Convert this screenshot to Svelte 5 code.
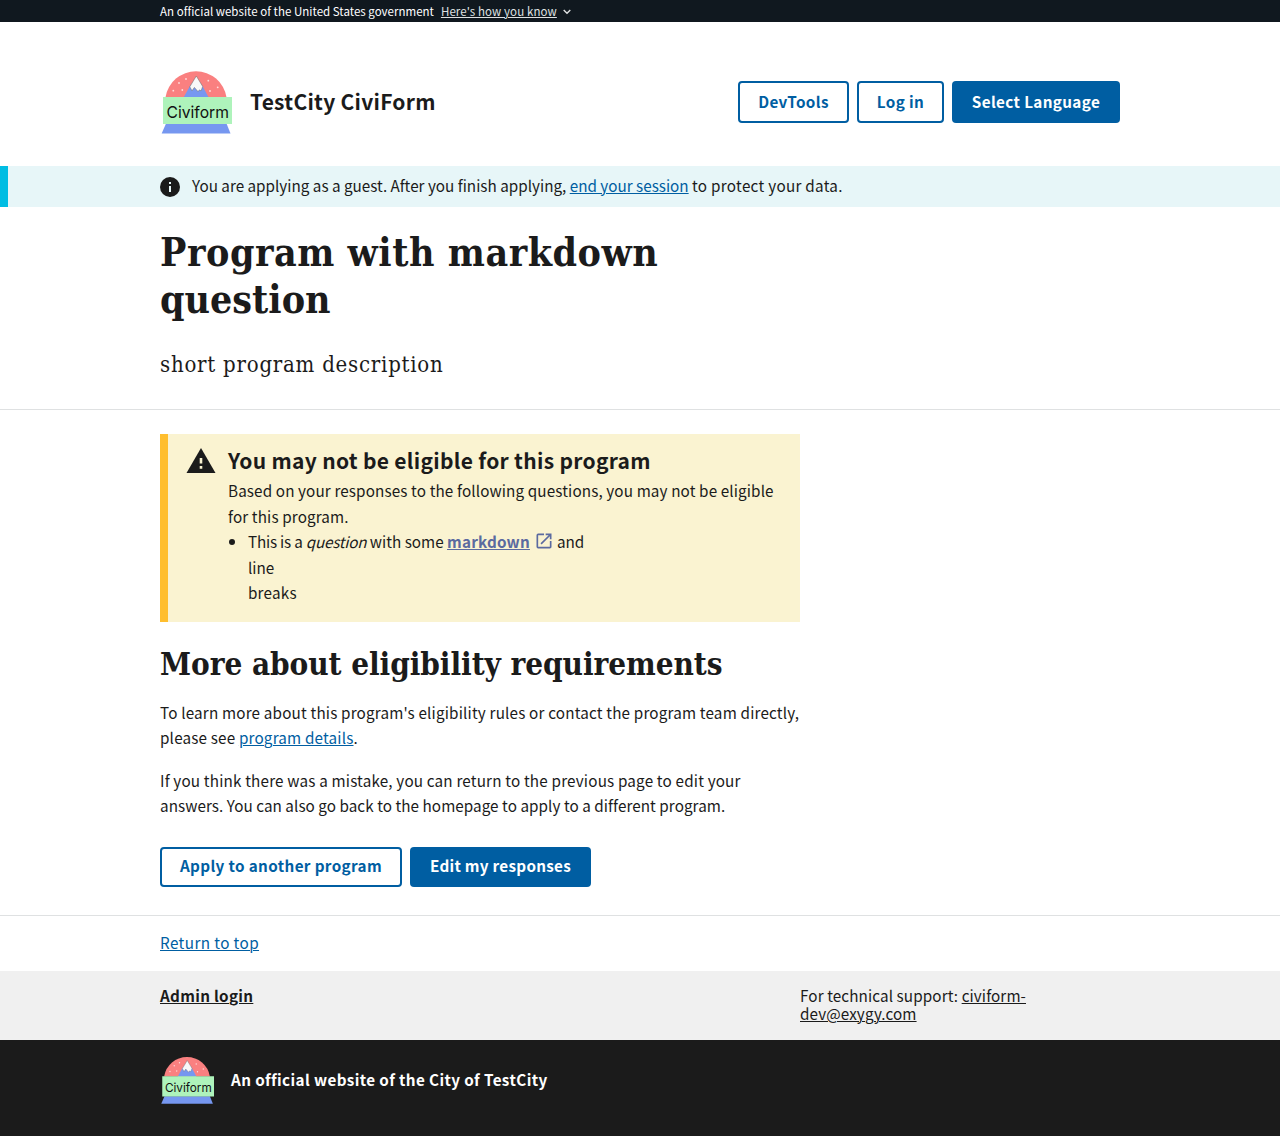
<script lang="ts">
  const flakes = [[13.3, 24.7], [19, 17], [22.3, 24], [26, 13], [48.3, 14.7], [50, 25], [57.7, 21.3]];
</script>

{#snippet logo(size: number)}
  <svg width={size} height={size} viewBox="0 0 72 72" aria-label="Civiform">
    <path d="M5.500 31.200A30.900 30.900 0 0 1 66.500 31.200z" fill="#fa8080" />
    {#each flakes as [x, y]}
      <circle cx={x} cy={y} r=".9" fill="#ffdcdc" />
    {/each}
    <path d="M23.500 31.500 30 20 36.300 12 42.500 20 48.700 31.500z" fill="#7697f0" />
    <path d="M36.300 10 29.800 20.800l2.200 4 2.400-3.400 3.600 4.200 1.600-1.800 1.400 1.200 1.700-4.600z" fill="#f8f8f8" stroke="#666" stroke-width=".5" />
    <path d="M6 57.500h60.500l4 10H1.700z" fill="#7697f0" />
    <rect x="3" y="31" width="69" height="27" fill="#aef3bb" />
    <text x="6.500" y="51.600" textLength="62.500" lengthAdjust="spacingAndGlyphs" font-family="Inter, sans-serif" font-weight="400" font-size="16.500" fill="#111">Civiform</text>
  </svg>
{/snippet}

<div class="banner">
  <div class="wrap">
    <span class="gov">An official website of the United States government</span>
    <a class="know" href="#top">Here's how you know</a>
    <svg width="8" height="6" viewBox="0 0 8 6"><path d="M.7 1 4 4.300 7.300 1" fill="none" stroke="#dfe1e2" stroke-width="1.400" /></svg>
  </div>
</div>

<header>
  <div class="wrap">
    {@render logo(72)}
    <span class="brand">TestCity CiviForm</span>
    <nav>
      <button class="outline dev">DevTools</button>
      <button class="outline login">Log in</button>
      <button class="lang">Select Language</button>
    </nav>
  </div>
</header>

<div class="guest">
  <div class="wrap">
    <svg width="20" height="20" viewBox="0 0 20 20"><circle cx="10" cy="10" r="10" fill="#1b1b1b" /><path d="M9 5h2v2H9zM9 9h2v6H9z" fill="#e7f6f8" /></svg>
    <p>You are applying as a guest. After you finish applying, <a href="#end">end your session</a> <span class="tail">to protect your data.</span></p>
  </div>
</div>

<section class="intro">
  <div class="wrap">
    <h1><span>Program with markdown</span><br />question</h1>
    <p class="desc">short program description</p>
  </div>
</section>

<main>
  <div class="wrap">
    <div class="alert">
      <svg class="warn" width="30" height="26" viewBox="0 0 30 26"><path d="M15 0 29.500 25H.5z" fill="#1b1b1b" /><path d="M13.700 10h2.600v5.500h-2.600zM13.700 18h2.600v2.700h-2.600z" fill="#faf3d1" /></svg>
      <div class="alert-body">
        <h3>You may not be eligible for this program</h3>
        <p class="reason">Based on your responses to the following questions, you may not be eligible<br />for this program.</p>
        <ul>
          <li><span class="lead">This is a <em>question</em></span> with some <a class="md" href="#md">markdown</a><svg class="ext" width="20" height="20" viewBox="0 0 24 24"><path fill="#5b6aa0" d="M19 19H5V5h7V3H5a2 2 0 0 0-2 2v14a2 2 0 0 0 2 2h14c1.100 0 2-.9 2-2v-7h-2v7zM14 3v2h3.590l-9.830 9.830 1.410 1.410L19 6.410V10h2V3h-7z" /></svg>and<br />line<br /><span class="last">breaks</span></li>
        </ul>
      </div>
    </div>
    <h2>More about eligibility requirements</h2>
    <p class="loose">To learn more about this program's eligibility rules or contact the program team directly,<br />please see <a href="#details">program details</a>.</p>
    <p class="loose">If you think there was a mistake, you can return to the previous page to edit your<br /><span class="tight">answers. You can also go back to the homepage to apply to a different program.</span></p>
    <div class="actions">
      <button class="outline apply">Apply to another program</button>
      <button class="edit">Edit my responses</button>
    </div>
  </div>
</main>

<footer>
  <div class="top"><div class="wrap"><a href="#top">Return to top</a></div></div>
  <div class="mid">
    <div class="wrap">
      <a class="admin" href="#admin">Admin login</a>
      <p>For technical support: <a href="#mail">civiform-<br />dev@exygy.com</a></p>
    </div>
  </div>
  <div class="end">
    <div class="wrap">
      {@render logo(54)}
      <span>An official website of the City of TestCity</span>
    </div>
  </div>
</footer>

<style>
  :global(body) { background: #fff; color: #1b1b1b; font: 15.250px/25.400px "Noto Sans CJK SC", sans-serif; }
  * { box-sizing: border-box; }
  p, h1, h2, h3, ul { margin: 0; padding: 0; }
  svg { display: block; flex: none; }
  a { color: #005ea2; text-underline-offset: 1px; text-decoration-thickness: 1px; }
  .wrap { width: 960px; margin: 0 auto; white-space: nowrap; }
  .banner { height: 22px; background: #10181f; color: #fff; font-size: 11.500px; line-height: 22px; }
  .banner .wrap { display: flex; align-items: center; }
  .banner svg { margin-top: 2px; }
  .gov { letter-spacing: .02px; }
  .know { color: #dfe1e2; margin: 0 6px 0 7px; letter-spacing: .1px; }
  header { height: 144px; padding-top: 44px; }
  header .wrap { display: flex; align-items: center; height: 72px; }
  .brand { font-size: 21px; font-weight: 700; margin: 0 0 0 18px; letter-spacing: .26px; }
  nav { display: flex; gap: 8px; margin-left: auto; }
  button { height: 42px; padding: 0 0 2px; border: 0; border-radius: 4px; background: #005ea2; color: #fff; font: 700 15.250px/15px "Noto Sans CJK SC", sans-serif; letter-spacing: .36px; white-space: nowrap; }
  .outline { background: #fff; color: #005ea2; border: 2px solid #005ea2; }
  .dev { width: 111px; }
  .login { width: 87px; }
  .lang { width: 168px; }
  .guest { height: 41px; background: #e7f6f8; border-left: 8px solid #00bde3; padding-right: 8px; }
  .guest .wrap { display: flex; align-items: center; gap: 12px; height: 41px; }
  .guest p { margin-top: -2px; }
  .tail { letter-spacing: .28px; }
  .intro { height: 203px; border-bottom: 1px solid #dfe1e2; padding-top: 22px; }
  h1, h2, .desc { font-family: "DejaVu Serif Condensed", "DejaVu Serif", serif; font-stretch: condensed; }
  h1 { font-size: 39px; line-height: 46.800px; }
  h1 span { letter-spacing: .53px; }
  .desc { font-size: 22px; line-height: 32px; margin-top: 26px; letter-spacing: .76px; }
  main { height: 505px; padding-top: 24px; }
  .alert { display: flex; width: 640px; height: 188px; background: #faf3d1; border-left: 8px solid #ffbe2e; padding: 14px 0 0 18px; }
  .alert-body { margin: -1px 0 0 12px; }
  h3 { font-size: 21px; line-height: 26px; margin-bottom: 5.300px; letter-spacing: .3px; }
  .reason { letter-spacing: .12px; }
  ul { padding-left: 20px; }
  .lead { letter-spacing: -.22px; }
  .last { letter-spacing: .2px; }
  .md { font-weight: 700; color: #5b6aa0; letter-spacing: .2px; }
  .ext { display: inline-block; vertical-align: -3px; margin: 0 3px 0 4px; }
  h2 { font-size: 31.200px; line-height: 38px; margin: 23px 0 17px; letter-spacing: -.06px; }
  .loose { letter-spacing: .17px; }
  .loose + .loose { margin-top: 17px; }
  .tight { letter-spacing: .05px; }
  .actions { display: flex; gap: 8px; margin-top: 28px; }
  .actions button { height: 40px; }
  .apply { width: 242px; }
  .edit { width: 181px; letter-spacing: .28px; }
  .top { height: 56px; border-top: 1px solid #dfe1e2; padding-top: 14px; letter-spacing: .4px; }
  .mid { height: 69px; background: #f0f0f0; padding-top: 15px; line-height: 18px; letter-spacing: .1px; }
  .mid .wrap { display: grid; grid-template-columns: 640px 1fr; }
  .mid a { color: #1b1b1b; }
  .admin { font-weight: 700; letter-spacing: .3px; }
  .end { height: 96px; background: #1b1b1b; color: #fff; font-weight: 700; padding-top: 13px; letter-spacing: .38px; }
  .end .wrap { display: flex; align-items: center; gap: 17px; height: 54px; }
  .end text { letter-spacing: 0; }
</style>
